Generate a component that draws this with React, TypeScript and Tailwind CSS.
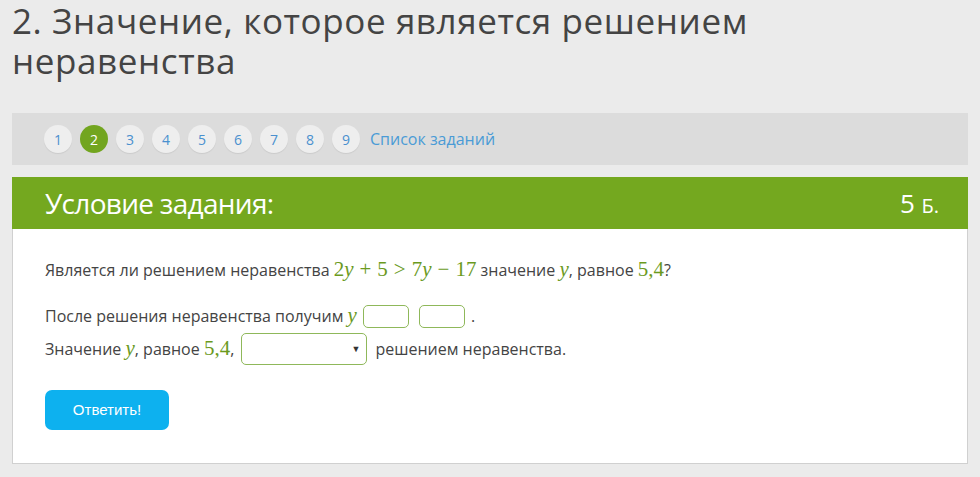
import React from "react";

const M = ({ children }: { children: React.ReactNode }) => (
  <span className="font-['Liberation_Serif',serif] text-[21px] text-[#6b9a1e]">{children}</span>
);

const V = ({ children }: { children: React.ReactNode }) => (
  <span className="font-['Liberation_Serif',serif] italic text-[21px] text-[#6b9a1e]">{children}</span>
);

const Op = ({ children }: { children: React.ReactNode }) => (
  <span className="mx-[6px]">{children}</span>
);

const App = () => {
  const nums = [1, 2, 3, 4, 5, 6, 7, 8, 9];
  return (
    <div className="min-h-[477px] bg-[#ebebeb] font-['Open_Sans',sans-serif] text-[#444] px-3 pb-4">
      <h1 className="max-w-[800px] pt-[1px] text-[35px] leading-[40px] tracking-[0.6px] text-[#444]">
        2. Значение, которое является решением неравенства
      </h1>

      <div className="mt-[32px] h-[52px] bg-[#dcdcdc] flex items-center pl-[32px] gap-2">
        {nums.map((n) => (
          <span
            key={n}
            className={
              n === 2
                ? "w-7 h-7 rounded-full bg-[#72a51f] text-white text-[14px] flex items-center justify-center"
                : "w-7 h-7 rounded-full bg-[#eeeeee] text-[#4a90cf] text-[14px] flex items-center justify-center shadow-[0_1px_1px_rgba(0,0,0,0.08)]"
            }
          >
            {n}
          </span>
        ))}
        <a className="ml-[2px] text-[16px] text-[#4a9bd6]">Список заданий</a>
      </div>

      <div className="mt-3 border border-[#d0d0d0] bg-white">
        <div className="-m-px h-[52px] bg-[#74a81f] flex items-center justify-between pl-[33px] pr-[29px] text-white">
          <span className="text-[28px] tracking-[-0.7px]">Условие задания:</span>
          <span className="text-[26px]">
            5 <span className="text-[20px]">Б.</span>
          </span>
        </div>

        <div className="pl-[32px] pt-[29px] pb-[33px] text-[16px]">
          <p className="leading-[24px]">
            Является ли решением неравенства{" "}
            <M>
              2<V>y</V>
              <Op>+</Op>5<Op>&gt;</Op>7<V>y</V>
              <Op>−</Op>17
            </M>{" "}
            значение <V>y</V>, равное <M>5,4</M>?
          </p>

          <div className="mt-[22px] flex items-center h-[24px]">
            <span>После решения неравенства получим&nbsp;</span>
            <V>y</V>
            <span className="ml-[6px] w-[46px] h-[23px] rounded-[5px] border border-[#8fb85a] bg-white" />
            <span className="ml-[10px] w-[46px] h-[23px] rounded-[5px] border border-[#8fb85a] bg-white" />
            <span className="ml-[6px]">.</span>
          </div>

          <div className="mt-[5px] flex items-center h-[32px]">
            <span>Значение&nbsp;</span>
            <V>y</V>
            <span>, равное&nbsp;</span>
            <M>5,4</M>
            <span>,&nbsp;</span>
            <span className="ml-[3px] w-[126px] h-[32px] rounded-[5px] border border-[#8fb85a] bg-white flex items-center justify-end pr-[6px] text-[9px] text-[#333]">
              ▼
            </span>
            <span className="ml-[8px]">решением неравенства.</span>
          </div>

          <button className="mt-[25px] w-[124px] h-[40px] rounded-[7px] bg-[#0db1ef] text-white text-[15px] font-['Liberation_Sans',sans-serif]">
            Ответить!
          </button>
        </div>
      </div>
    </div>
  );
};

export default App;
